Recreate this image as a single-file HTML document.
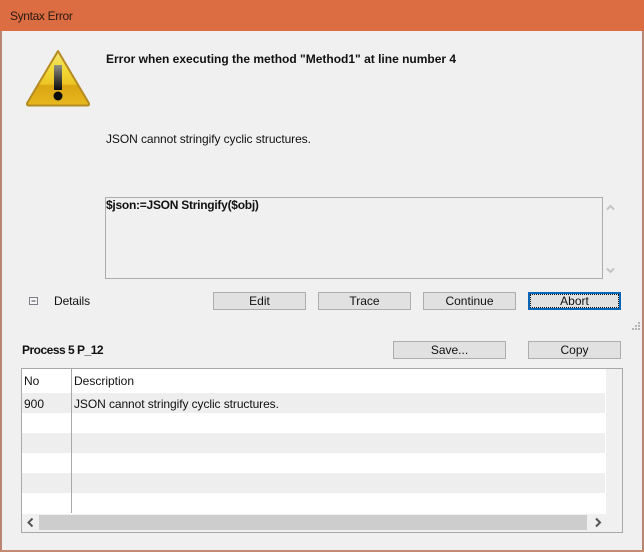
<!DOCTYPE html>
<html>
<head>
<meta charset="utf-8">
<style>
html,body{margin:0;padding:0;width:644px;height:552px;overflow:hidden;background:#f0f0f0}
body{position:relative;font-family:"Liberation Sans",sans-serif;font-size:12px;color:#111}
div{position:absolute;box-sizing:border-box}
.t{white-space:nowrap;line-height:16px;height:16px}
.b{font-weight:bold}
.btn{height:18px;background:#e1e1e1;border:1px solid #adadad;text-align:center;line-height:16px;color:#111}
.row{left:22px;width:583px;height:20px}
svg{position:absolute;left:0;top:0}
</style>
</head>
<body>
<div style="left:0;top:0;width:644px;height:31px;background:#dc6c41"></div>
<div style="left:0;top:31px;width:2px;height:521px;background:#b98472"></div>
<div style="left:642px;top:31px;width:2px;height:521px;background:#b98472"></div>
<div style="left:0;top:550px;width:644px;height:2px;background:#c58a72"></div>
<div class="t" style="left:10px;top:8px;color:#2a1a12;letter-spacing:-.35px">Syntax Error</div>

<svg width="644" height="552" viewBox="0 0 644 552">
<defs>
<linearGradient id="g" x1="0" y1="0" x2="0" y2="1">
<stop offset="0" stop-color="#f2e27a"/><stop offset=".3" stop-color="#f2dc3a"/><stop offset=".6" stop-color="#ecc624"/><stop offset=".64" stop-color="#dba512"/><stop offset="1" stop-color="#e6b81e"/>
</linearGradient>
<linearGradient id="m" x1="0" y1="0" x2="0" y2="1">
<stop offset="0" stop-color="#8f8f84"/><stop offset=".5" stop-color="#4c4c44"/><stop offset="1" stop-color="#0c0c0c"/>
</linearGradient>
</defs>
<path d="M58 51 L88.500 102.500 Q90 105.500 87 105.500 L29 105.500 Q26 105.500 27.500 102.500 Z" fill="url(#g)" stroke="#b48a22" stroke-width="2" stroke-linejoin="round"/>
<rect x="54" y="65" width="8" height="25" fill="url(#m)"/>
<circle cx="58" cy="96" r="4.500" fill="#0c0c0c"/>
</svg>

<div class="t b" style="left:106px;top:51px;font-size:12px">Error when executing the method "Method1" at line number 4</div>
<div class="t" style="left:106px;top:131px;letter-spacing:-.08px">JSON cannot stringify cyclic structures.</div>

<div style="left:105px;top:197px;width:498px;height:82px;border:1px solid #acacac"></div>
<div class="t b" style="left:106px;top:197px;letter-spacing:-.26px">$json:=JSON Stringify($obj)</div>

<svg width="644" height="552" viewBox="0 0 644 552" fill="none">
<path d="M607 209.500 L610.500 206 L614 209.500" stroke="#c4c4c4" stroke-width="2"/>
<path d="M607 268.500 L610.500 272 L614 268.500" stroke="#c4c4c4" stroke-width="2"/>
<path d="M610 404.500 L613.500 401 L617 404.500" stroke="#c4c4c4" stroke-width="2"/>
<path d="M610 503.500 L613.500 507 L617 503.500" stroke="#c4c4c4" stroke-width="2"/>
<rect x="29.500" y="297.500" width="8" height="7" stroke="#7d7d8a" fill="#f4f4f4"/>
<path d="M31.500 301 H35.500" stroke="#444"/>
<path d="M632 328h2v2h-2zM635 328h2v2h-2zM638 328h2v2h-2zM638 325h2v2h-2zM635 325h2v2h-2zM638 322h2v2h-2z" fill="#b5b5b5"/>
</svg>

<div class="t" style="left:54px;top:293px;letter-spacing:-.1px">Details</div>
<div class="btn" style="left:213px;top:292px;width:93px">Edit</div>
<div class="btn" style="left:318px;top:292px;width:93px">Trace</div>
<div class="btn" style="left:423px;top:292px;width:93px">Continue</div>
<div class="btn" style="left:528px;top:292px;width:93px;border:2px solid #0a66b8;line-height:14px"><div style="left:0;top:0;width:89px;height:14px;border:1px dotted #111"></div>Abort</div>

<div class="t b" style="left:22px;top:342px;letter-spacing:-.5px">Process 5 P_12</div>
<div class="btn" style="left:393px;top:341px;width:113px">Save...</div>
<div class="btn" style="left:528px;top:341px;width:93px">Copy</div>

<div style="left:21px;top:368px;width:602px;height:165px;border:1px solid #a8a8a8;background:#f0f0f0"></div>
<div style="left:22px;top:369px;width:584px;height:145px;background:#fff"></div>
<div class="row" style="top:393px;background:#eeeeee"></div>
<div class="row" style="top:433px;background:#eeeeee"></div>
<div class="row" style="top:473px;background:#eeeeee"></div>
<div style="left:71px;top:369px;width:1px;height:144px;background:#a8a8a8"></div>
<div class="t" style="left:24px;top:373px">No</div>
<div class="t" style="left:74px;top:373px">Description</div>
<div class="t" style="left:24px;top:396px">900</div>
<div class="t" style="left:74px;top:396px;letter-spacing:-.08px">JSON cannot stringify cyclic structures.</div>

<div style="left:22px;top:515px;width:584px;height:15px;background:#f0f0f0"></div>
<div style="left:39px;top:515px;width:548px;height:15px;background:#cdcdcd"></div>
<svg width="644" height="552" viewBox="0 0 644 552" fill="none">
<path d="M32.500 518.500 L28.500 522.500 L32.500 526.500" stroke="#555" stroke-width="2"/>
<path d="M596 518.500 L600 522.500 L596 526.500" stroke="#555" stroke-width="2"/>
</svg>
</body>
</html>
